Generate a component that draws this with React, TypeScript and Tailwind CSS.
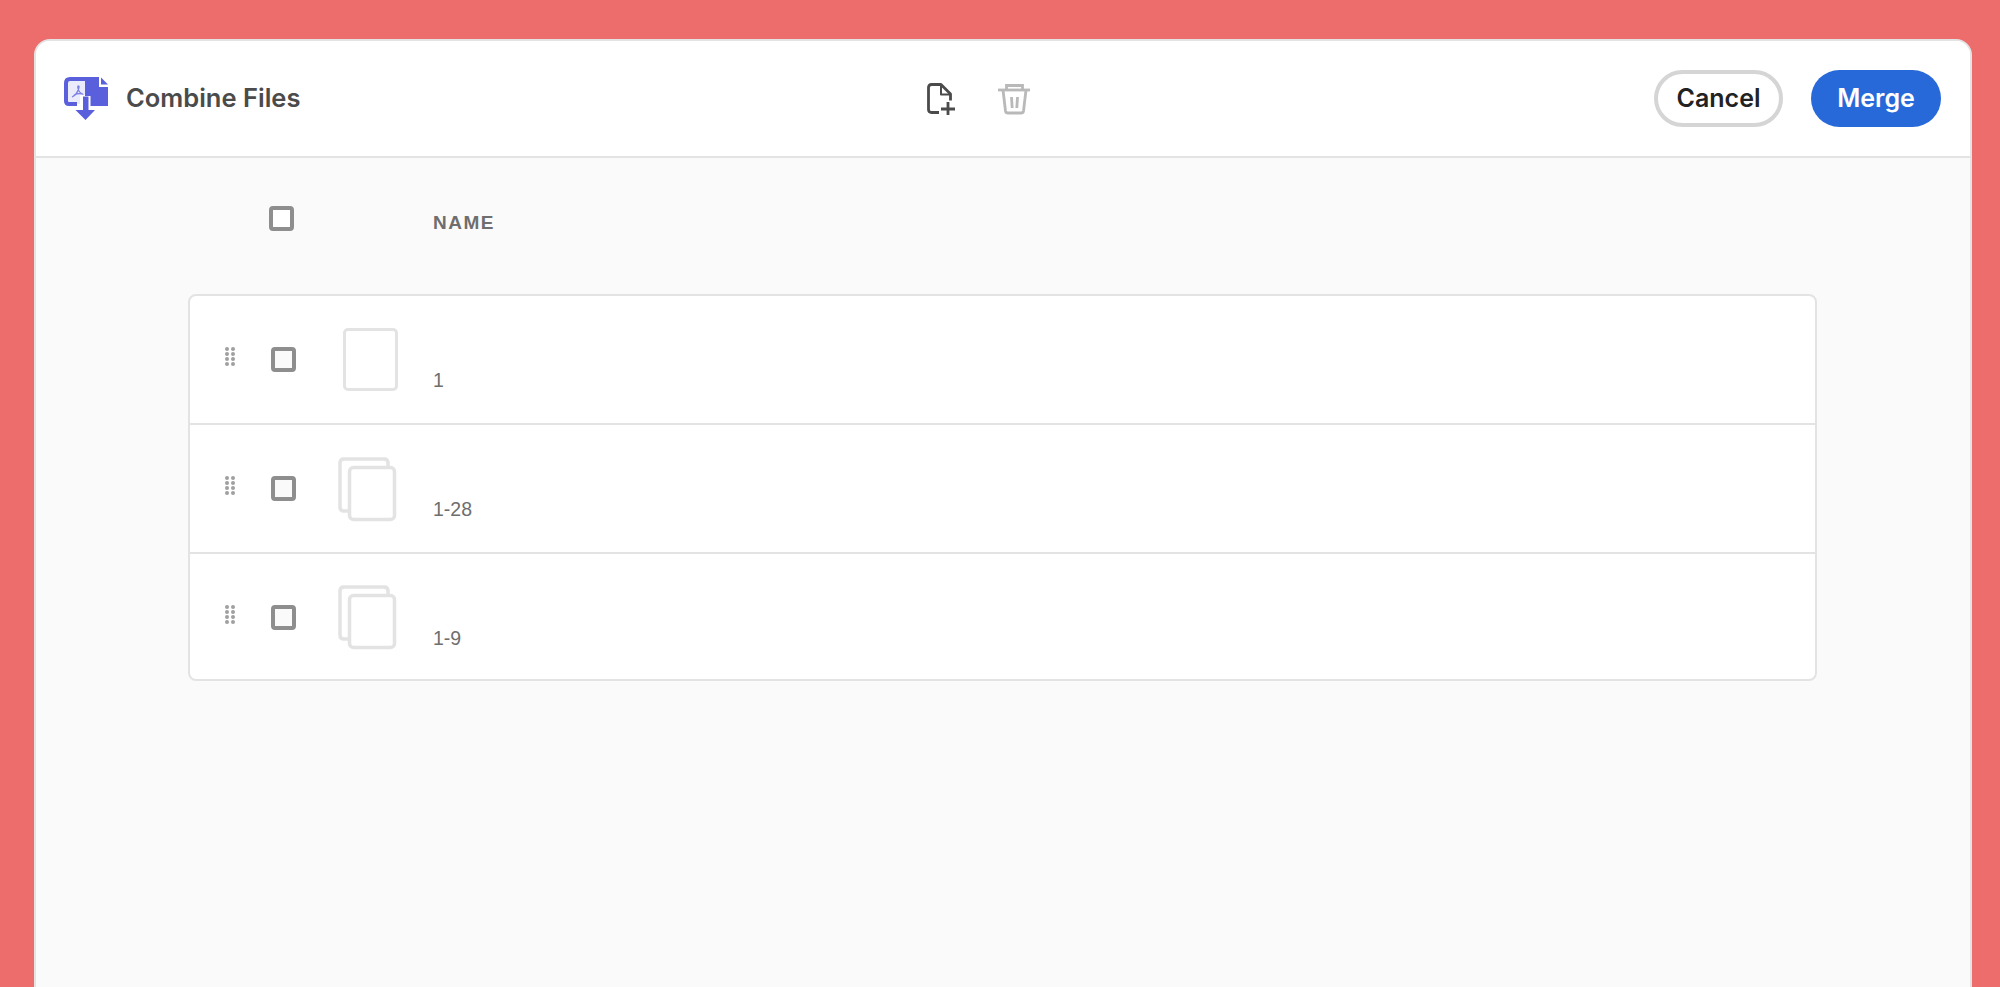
import React from 'react';

const rows = [
  { id: 'a', label: '1', stacked: false, top: 'mt-[32px]' },
  { id: 'b', label: '1-28', stacked: true, top: 'mt-[32px]' },
  { id: 'c', label: '1-9', stacked: true, top: 'mt-[31px]' },
];

const CombineIcon = () => (
  <svg width="46" height="46" viewBox="0 0 46 46" fill="none">
    {/* right doc with folded corner */}
    <path d="M22 1h14v10h9v19H22z" fill="#5a5fdc" />
    <path d="M38 1.500l7 7h-7z" fill="#5a5fdc" />
    {/* left doc */}
    <path d="M17 3H7Q3 3 3 7v18q0 3 3 3h11" fill="#eaebfb" />
    <path d="M22 3H7Q3 3 3 7v18q0 3 3 3h8" stroke="#5a5fdc" strokeWidth="4" />
    <path d="M17 5h5v14h-5z" fill="#eaebfb" />
    <path d="M9 21c3-1.500 6-5 7-9.500.4-2-1.500-2-1.200 0 .6 3.500 2.500 6 5.500 7M11 19c3-1.500 6-2 9-1" stroke="#7d81e4" strokeWidth="1.300" />
    {/* gap and arrow */}
    <rect x="17.500" y="20" width="10" height="12" fill="#fff" />
    <path d="M20 20.500h5.500V34H32L22.500 44 12.500 34H20z" fill="#5a5fdc" />
  </svg>
);

const AddFileIcon = () => (
  <svg width="30" height="34" viewBox="0 0 30 34" fill="none" stroke="#4b4b4b" strokeWidth="2.800">
    <path d="M13 30.500H5.500Q2.500 30.500 2.500 27.500V5.500Q2.500 2.500 5.500 2.500H15l9.500 9.500v6.500" strokeLinejoin="round" />
    <path d="M15 3v9.500h9" strokeLinejoin="round" strokeWidth="2" />
    <path d="M22 20v13M15 27h14" />
  </svg>
);

const TrashIcon = () => (
  <svg width="34" height="34" viewBox="0 0 34 34" fill="none" stroke="#b9b9b9" strokeWidth="2.800">
    <path d="M1 8h32" />
    <path d="M9.500 8V3.500h16V8" />
    <path d="M6 8l2.500 21q.300 2 2.500 2h13q2.200 0 2.500-2L29 8" />
    <path d="M14.500 15l.7 11M20.500 15l-.7 11" />
  </svg>
);

const Grip = () => (
  <div className="grid w-[10px] grid-cols-2 gap-x-[2px] gap-y-[1px]">
    {Array.from({ length: 8 }).map((_, i) => (
      <span key={i} className="h-[4px] w-[4px] rounded-full bg-[#a0a0a0]" />
    ))}
  </div>
);

const Check = ({ fill = 'bg-[#fafafa]' }: { fill?: string }) => (
  <span className={`block h-[25px] w-[25px] rounded-[4px] border-[4px] border-[#8e8e8e] ${fill}`} />
);

const Thumb = ({ stacked }: { stacked: boolean }) =>
  stacked ? (
    <svg width="60" height="66" viewBox="0 0 60 66" fill="none" stroke="#e3e3e3" strokeWidth="3.500">
      <path d="M10 54H6q-4 0-4-4V6q0-4 4-4h40q4 0 4 4v4" />
      <rect x="11.500" y="10.500" width="45" height="52" rx="4" fill="#fff" />
    </svg>
  ) : (
    <span className="block h-[63px] w-[55px] rounded-[5px] border-[3.500px] border-[#e3e3e3] bg-white" />
  );

export default function App() {
  return (
    <div className="h-screen overflow-hidden bg-[#ec6d6b] pl-[34px] pr-[28px] pt-[39px] font-['Inter',sans-serif] antialiased">
      <div className="flex h-[960px] flex-col rounded-t-[16px] border-2 border-[#e3e3e3] bg-[#fafafa]">
        <header className="flex h-[117px] shrink-0 items-center justify-between rounded-t-[14px] border-b-2 border-[#e3e3e3] bg-white pl-[27px] pr-[29px]">
          <div className="flex w-[552px] items-center gap-[17px]">
            <CombineIcon />
            <span className="-mt-[2px] text-[25.500px] font-semibold leading-none text-[#4b4b4b]">Combine Files</span>
          </div>
          <div className="flex items-center gap-[41px]">
            <AddFileIcon />
            <TrashIcon />
          </div>
          <div className="flex w-[600px] items-center justify-end gap-[28px]">
            <button className="h-[57px] w-[129px] rounded-full border-[4px] border-[#d5d5d5] bg-white text-[25px] font-semibold text-[#222222]">
              Cancel
            </button>
            <button className="h-[57px] w-[130px] rounded-full bg-[#2769d8] text-[25px] font-semibold text-white">
              Merge
            </button>
          </div>
        </header>

        <div className="flex h-[136px] shrink-0 items-start pl-[233px] pt-[48px]">
          <Check fill="bg-white" />
          <span className="ml-[139px] mt-[7px] font-['Liberation_Sans',sans-serif] text-[19px] font-bold leading-none tracking-[1.500px] text-[#6e6e6e]">
            NAME
          </span>
        </div>

        <div className="ml-[152px] w-[1629px] overflow-hidden rounded-[8px] border-2 border-[#e3e3e3] bg-white">
          {rows.map((row, i) => (
            <div
              key={row.id}
              className={`flex items-start ${i < rows.length - 1 ? 'h-[129px] border-b-2 border-[#e3e3e3]' : 'h-[125px]'}`}
            >
              <div className="ml-[35px] mt-[51px]">
                <Grip />
              </div>
              <div className="ml-[36px] mt-[51px]">
                <Check />
              </div>
              <div className={`${row.top} w-[137px] ${row.stacked ? 'pl-[42px]' : 'pl-[47px]'}`}>
                <Thumb stacked={row.stacked} />
              </div>
              <span className="mt-[75px] font-['Liberation_Sans',sans-serif] text-[19.500px] leading-none text-[#6e6e6e]">
                {row.label}
              </span>
            </div>
          ))}
        </div>
      </div>
    </div>
  );
}
